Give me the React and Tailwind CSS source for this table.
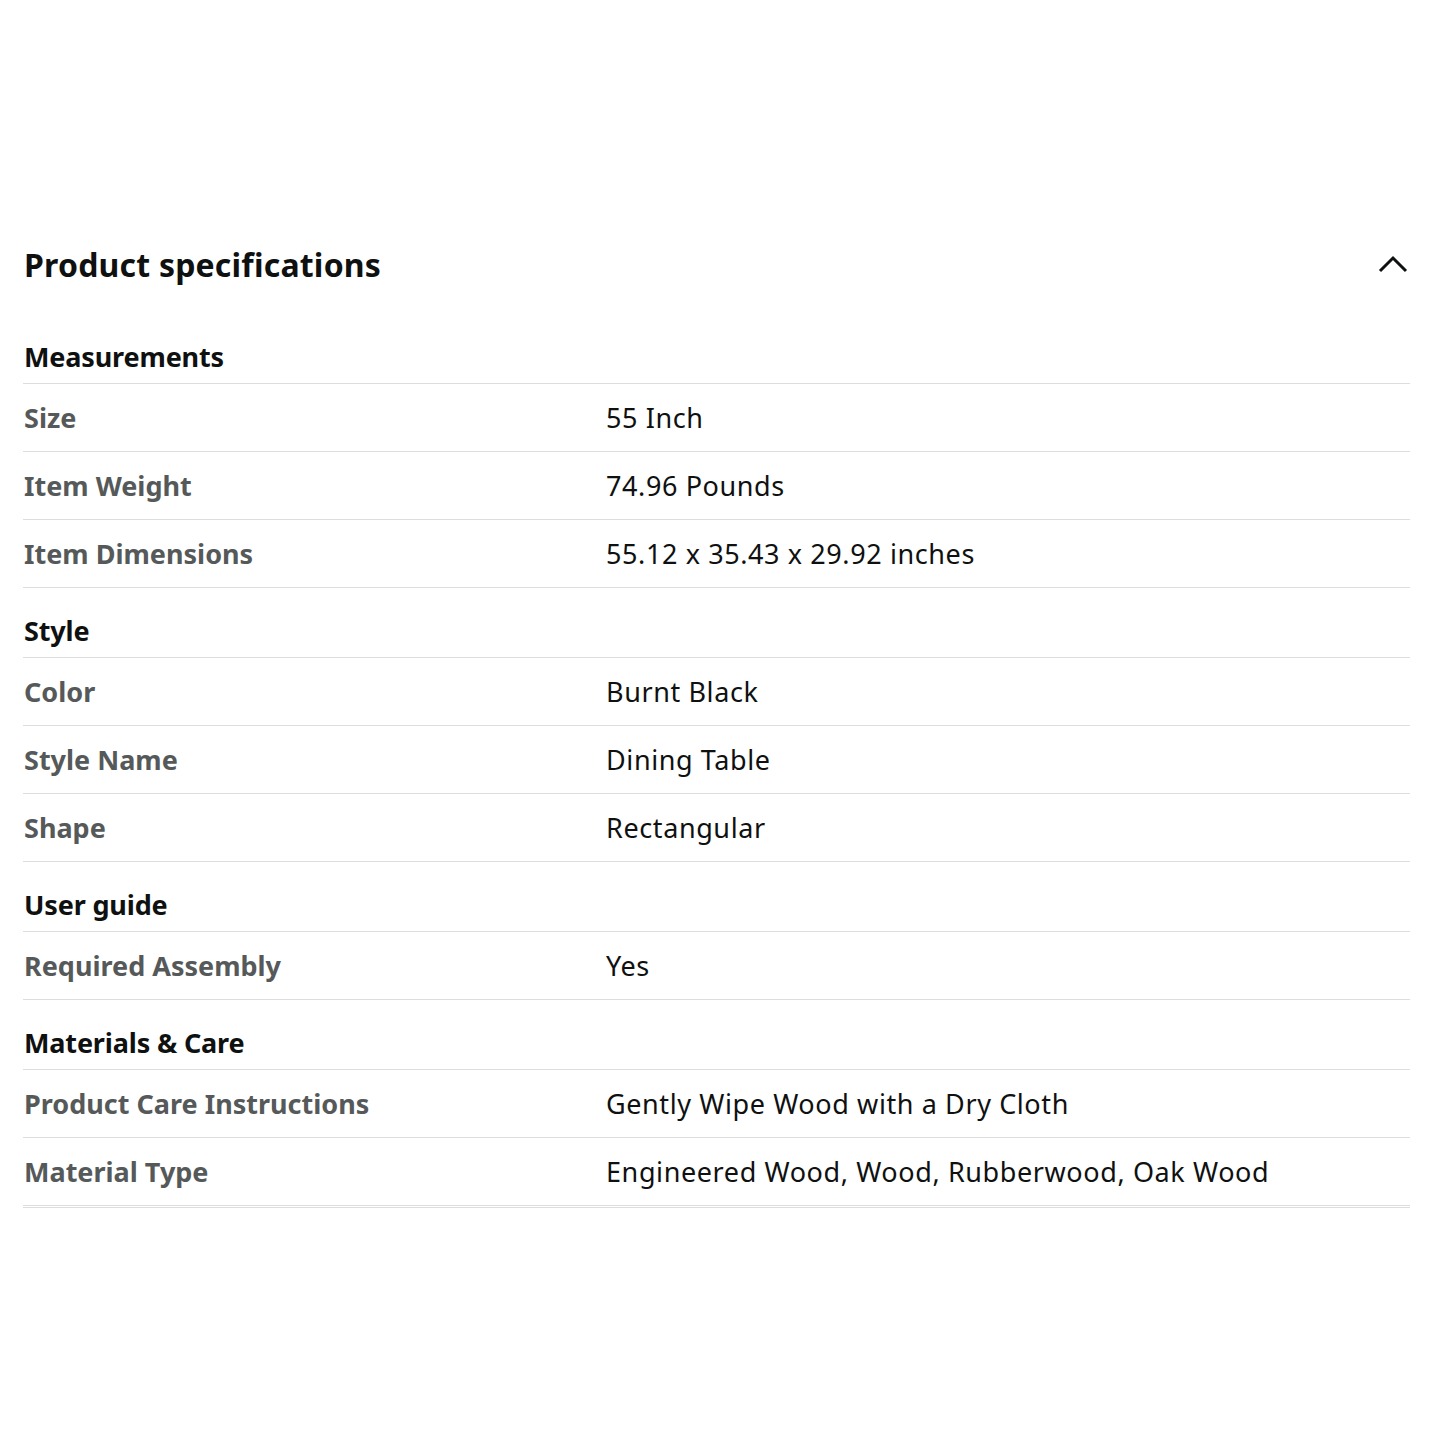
import React from "react";

const sections = [
  {
    title: "Measurements",
    rows: [
      ["Size", "55 Inch"],
      ["Item Weight", "74.96 Pounds"],
      ["Item Dimensions", "55.12 x 35.43 x 29.92 inches"],
    ],
  },
  {
    title: "Style",
    rows: [
      ["Color", "Burnt Black"],
      ["Style Name", "Dining Table"],
      ["Shape", "Rectangular"],
    ],
  },
  {
    title: "User guide",
    rows: [["Required Assembly", "Yes"]],
  },
  {
    title: "Materials & Care",
    rows: [
      ["Product Care Instructions", "Gently Wipe Wood with a Dry Cloth"],
      ["Material Type", "Engineered Wood, Wood, Rubberwood, Oak Wood"],
    ],
  },
];

export default function App() {
  return (
    <div
      className="min-h-[1436px] w-[1436px] bg-white pt-[245px] pl-[23px]"
      style={{ fontFamily: '"Noto Sans", "Open Sans", Arial, sans-serif' }}
    >
      <div className="w-[1387px]">
        <div className="flex h-[40px] items-center justify-between pl-[1px]">
          <h2 className="text-[32px] font-bold leading-[40px] text-[#0f1111] tracking-[0.2px]">
            Product specifications
          </h2>
          <svg width="32" height="22" viewBox="0 0 32 22" className="mr-[1px]">
            <path d="M3 17 L16 4 L29 17" fill="none" stroke="#0f1111" strokeWidth="3" />
          </svg>
        </div>
        <div className="mt-[29px]">
          {sections.map((s) => (
            <div key={s.title}>
              <div className="flex h-[70px] items-end border-b border-[#dddddd] pb-[10px] pl-[1px]">
                <span className="text-[27px] font-bold leading-[32px] tracking-[-0.15px] text-[#0f1111]">
                  {s.title}
                </span>
              </div>
              {s.rows.map(([k, v]) => (
                <div
                  key={k}
                  className="flex h-[68px] items-center border-b border-[#dddddd] pl-[1px]"
                >
                  <div className="w-[582px] text-[27px] font-bold leading-[32px] tracking-[0px] text-[#565959]">
                    {k}
                  </div>
                  <div className="text-[27px] leading-[32px] tracking-[0.6px] text-[#0f1111]">
                    {v}
                  </div>
                </div>
              ))}
            </div>
          ))}
          <div className="h-[2px] border-b border-[#dddddd]" />
        </div>
      </div>
    </div>
  );
}
